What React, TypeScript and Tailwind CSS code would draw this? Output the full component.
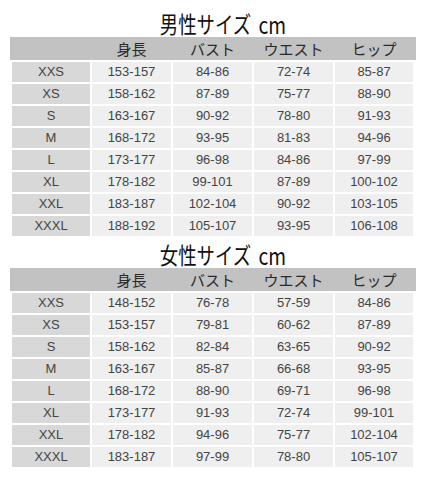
const HEAD = ['', '身長', 'バスト', 'ウエスト', 'ヒップ'];

const MEN = [
  ['XXS', '153-157', '84-86', '72-74', '85-87'],
  ['XS', '158-162', '87-89', '75-77', '88-90'],
  ['S', '163-167', '90-92', '78-80', '91-93'],
  ['M', '168-172', '93-95', '81-83', '94-96'],
  ['L', '173-177', '96-98', '84-86', '97-99'],
  ['XL', '178-182', '99-101', '87-89', '100-102'],
  ['XXL', '183-187', '102-104', '90-92', '103-105'],
  ['XXXL', '188-192', '105-107', '93-95', '106-108'],
];

const WOMEN = [
  ['XXS', '148-152', '76-78', '57-59', '84-86'],
  ['XS', '153-157', '79-81', '60-62', '87-89'],
  ['S', '158-162', '82-84', '63-65', '90-92'],
  ['M', '163-167', '85-87', '66-68', '93-95'],
  ['L', '168-172', '88-90', '69-71', '96-98'],
  ['XL', '173-177', '91-93', '72-74', '99-101'],
  ['XXL', '178-182', '94-96', '75-77', '102-104'],
  ['XXXL', '183-187', '97-99', '78-80', '105-107'],
];

const jp = { fontFamily: '"Noto Sans CJK JP", "Noto Sans", sans-serif' };
const cols = 'grid grid-cols-[78px_79px_79px_79px_78px] gap-x-[2px]';

function SizeTable({ title, rows, titleClass }: { title: string; rows: string[][]; titleClass: string }) {
  return (
    <section>
      <div className={`flex items-end justify-center pl-[20px] ${titleClass}`} style={jp}>
        <div className="flex items-end scale-x-[0.8]">
          <span className="text-[23px] leading-[28px] text-[#111]">{title}</span>
          <span className="ml-[9px] text-[24px] leading-[27px] text-[#111]">cm</span>
        </div>
      </div>
      <div className="mx-[10px] h-[23px] bg-[#c2c2c2] px-[2px]">
        <div className={`${cols} h-full items-center`}>
          {HEAD.map((h, i) => (
            <div key={i} className="text-center text-[15px] leading-none text-[#2a2a2a]" style={jp}>
              {h}
            </div>
          ))}
        </div>
      </div>
      <div className="mx-[12px] mt-[2px] flex flex-col gap-y-[2px]">
        {rows.map((r) => (
          <div key={r[0]} className={`${cols} h-[20px]`}>
            {r.map((c, i) => (
              <div
                key={i}
                className={`flex items-center justify-center text-[13px] text-[#444] ${
                  i === 0 ? 'bg-[#d8d8d8]' : 'bg-[#efefef]'
                }`}
                style={{ fontFamily: '"Liberation Sans", Arial, sans-serif' }}
              >
                {c}
              </div>
            ))}
          </div>
        ))}
      </div>
    </section>
  );
}

export default function App() {
  return (
    <div className="h-[488px] w-[426px] bg-white">
      <SizeTable title="男性サイズ" rows={MEN} titleClass="h-[37px]" />
      <SizeTable title="女性サイズ" rows={WOMEN} titleClass="h-[32px]" />
    </div>
  );
}
